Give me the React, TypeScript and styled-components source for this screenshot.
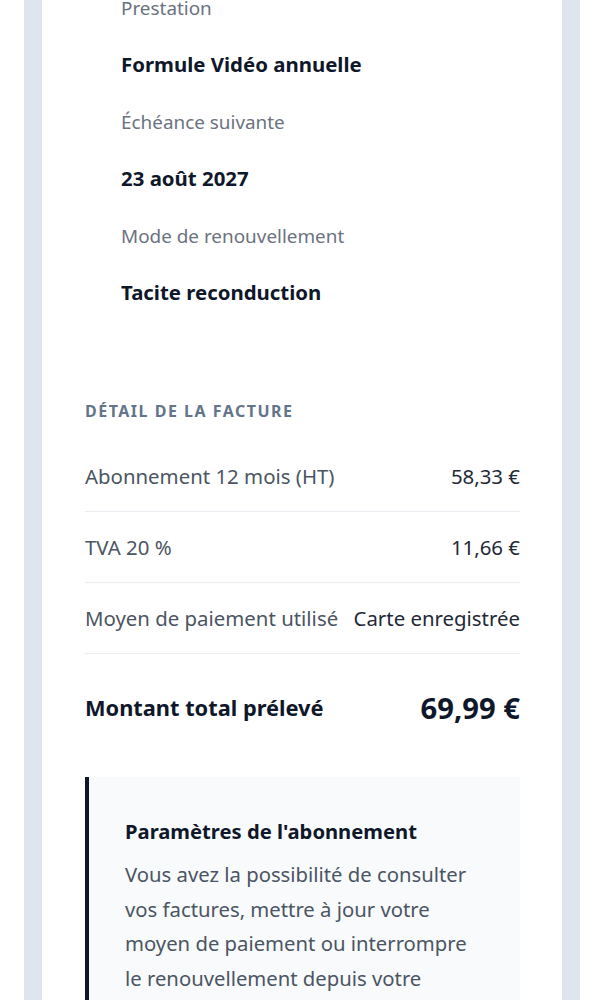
import React from "react";
import styled, { createGlobalStyle } from "styled-components";

const Global = createGlobalStyle`
  html, body { margin: 0; padding: 0; background: #ffffff; }
  body { font-family: "Noto Sans", "Open Sans", "DejaVu Sans", sans-serif; -webkit-font-smoothing: antialiased; }
  * { box-sizing: border-box; }
`;

const Page = styled.div`
  padding: 0 26px 0 24px;
  height: 1000px;
  overflow: hidden;
`;

const Frame = styled.div`
  background: #dfe5ef;
  padding: 0 18px;
  min-height: 1000px;
`;

const Card = styled.main`
  background: #ffffff;
  padding: 0 42px 40px 43px;
  min-height: 1000px;
`;

const InfoList = styled.dl`
  margin: -6px 0 0 0;
  padding: 0 0 0 36px;
`;

const Term = styled.dt`
  font-size: 18.9px;
  line-height: 28px;
  color: #6b7280;
  margin: 0 0 28px 0;
`;

const Value = styled.dd`
  font-size: 20.4px;
  line-height: 28px;
  font-weight: 700;
  color: #0f172a;
  margin: 0 0 30px 0;
`;

const Section = styled.section`
  margin-top: 95px;
`;

const SectionTitle = styled.h3`
  margin: 0 0 20px 0;
  font-size: 16px;
  line-height: 20px;
  font-weight: 700;
  letter-spacing: 1.5px;
  text-transform: uppercase;
  color: #64748b;
`;

const Row = styled.div`
  display: flex;
  justify-content: space-between;
  align-items: center;
  padding: 20px 0;
  line-height: 30px;
  font-size: 20.4px;
  border-bottom: 1px solid #e9ecf0;
`;

const RowLabel = styled.span`
  color: #4b5563;
`;

const RowValue = styled.span`
  color: #1f2937;
`;

const TotalRow = styled.div`
  display: flex;
  justify-content: space-between;
  align-items: center;
  padding: 34px 0 0 0;
  line-height: 40px;
`;

const TotalLabel = styled.span`
  font-size: 21.8px;
  font-weight: 700;
  color: #0f172a;
`;

const TotalValue = styled.span`
  font-size: 29.2px;
  font-weight: 700;
  color: #0f172a;
`;

const Note = styled.aside`
  margin-top: 49px;
  background: #f8fafc;
  border-left: 4px solid #0f172a;
  padding: 40px 36px 40px 36px;
`;

const NoteTitle = styled.h4`
  margin: 0 0 12px 0;
  font-size: 20.2px;
  line-height: 28px;
  font-weight: 700;
  color: #0f172a;
`;

const NoteText = styled.p`
  margin: 0;
  font-size: 20.3px;
  line-height: 34.5px;
  color: #4b5563;
`;

export default function App() {
  return (
    <>
      <Global />
      <Page>
        <Frame>
          <Card>
            <InfoList>
              <Term>Prestation</Term>
              <Value>Formule Vidéo annuelle</Value>
              <Term>Échéance suivante</Term>
              <Value>23 août 2027</Value>
              <Term>Mode de renouvellement</Term>
              <Value>Tacite reconduction</Value>
            </InfoList>
            <Section>
              <SectionTitle>Détail de la facture</SectionTitle>
              <Row>
                <RowLabel>Abonnement 12 mois (HT)</RowLabel>
                <RowValue>58,33 €</RowValue>
              </Row>
              <Row>
                <RowLabel>TVA 20 %</RowLabel>
                <RowValue>11,66 €</RowValue>
              </Row>
              <Row>
                <RowLabel>Moyen de paiement utilisé</RowLabel>
                <RowValue>Carte enregistrée</RowValue>
              </Row>
              <TotalRow>
                <TotalLabel>Montant total prélevé</TotalLabel>
                <TotalValue>69,99 €</TotalValue>
              </TotalRow>
            </Section>
            <Note>
              <NoteTitle>Paramètres de l'abonnement</NoteTitle>
              <NoteText>
                Vous avez la possibilité de consulter vos factures, mettre à jour votre moyen de paiement ou interrompre le renouvellement depuis votre espace client.
              </NoteText>
            </Note>
          </Card>
        </Frame>
      </Page>
    </>
  );
}
